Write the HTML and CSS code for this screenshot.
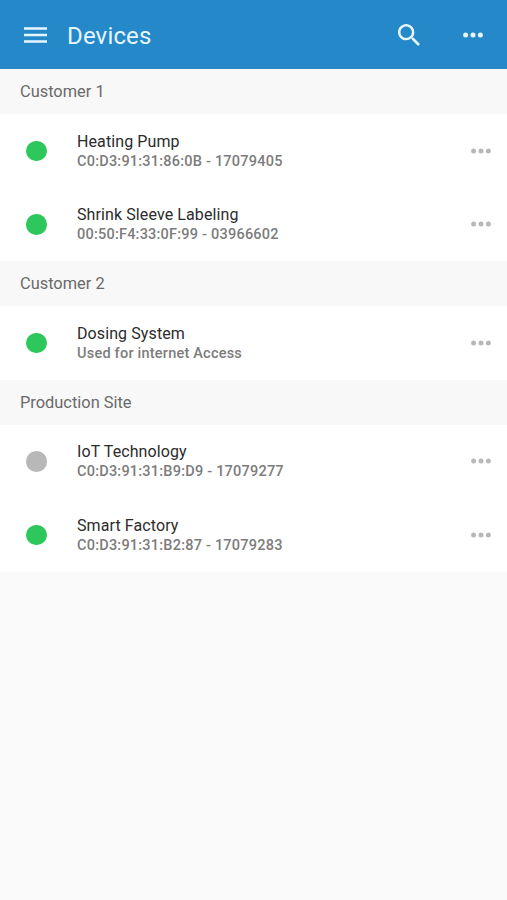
FILE: index.html
```html
<!DOCTYPE html>
<html lang="en">
<head>
<meta charset="utf-8">
<title>Devices</title>
<link rel="stylesheet" href="styles.css">
</head>
<body>

<header class="toolbar">
	<svg class="menu" viewBox="0 0 23 16"><path d="M0 .3h23v2.4H0zM0 6.8h23v2.4H0zM0 13.3h23v2.4H0z"/></svg>
	<h1>Devices</h1>
	<svg class="search" viewBox="3 3 17.5 17.5"><path d="M15.5 14h-.79l-.28-.27C15.41 12.59 16 11.11 16 9.5 16 5.91 13.09 3 9.5 3S3 5.91 3 9.5 5.91 16 9.5 16c1.61 0 3.09-.59 4.23-1.57l.27.28v.79l5 4.99L20.49 19l-4.99-5zm-6 0C7.01 14 5 11.99 5 9.5S7.01 5 9.5 5 14 7.01 14 9.5 11.99 14 9.5 14z"/></svg>
	<svg class="dots" viewBox="0 0 20 6"><circle cx="2.6" cy="3" r="2.5"/><circle cx="10" cy="3" r="2.5"/><circle cx="17.4" cy="3" r="2.5"/></svg>
</header>

<main>
	<h2>Customer 1</h2>
	<ul>
		<li>
			<span class="status online"></span>
			<div class="device"><h3>Heating Pump</h3><p>C0:D3:91:31:86:0B - 17079405</p></div>
			<svg class="dots" viewBox="0 0 20 6"><circle cx="2.6" cy="3" r="2.5"/><circle cx="10" cy="3" r="2.5"/><circle cx="17.4" cy="3" r="2.5"/></svg>
		</li>
		<li>
			<span class="status online"></span>
			<div class="device"><h3>Shrink Sleeve Labeling</h3><p>00:50:F4:33:0F:99 - 03966602</p></div>
			<svg class="dots" viewBox="0 0 20 6"><circle cx="2.6" cy="3" r="2.5"/><circle cx="10" cy="3" r="2.5"/><circle cx="17.4" cy="3" r="2.5"/></svg>
		</li>
	</ul>

	<h2>Customer 2</h2>
	<ul>
		<li>
			<span class="status online"></span>
			<div class="device"><h3>Dosing System</h3><p>Used for internet Access</p></div>
			<svg class="dots" viewBox="0 0 20 6"><circle cx="2.6" cy="3" r="2.5"/><circle cx="10" cy="3" r="2.5"/><circle cx="17.4" cy="3" r="2.5"/></svg>
		</li>
	</ul>

	<h2>Production Site</h2>
	<ul>
		<li>
			<span class="status"></span>
			<div class="device"><h3>IoT Technology</h3><p>C0:D3:91:31:B9:D9 - 17079277</p></div>
			<svg class="dots" viewBox="0 0 20 6"><circle cx="2.6" cy="3" r="2.5"/><circle cx="10" cy="3" r="2.5"/><circle cx="17.4" cy="3" r="2.5"/></svg>
		</li>
		<li>
			<span class="status online"></span>
			<div class="device"><h3>Smart Factory</h3><p>C0:D3:91:31:B2:87 - 17079283</p></div>
			<svg class="dots" viewBox="0 0 20 6"><circle cx="2.6" cy="3" r="2.5"/><circle cx="10" cy="3" r="2.5"/><circle cx="17.4" cy="3" r="2.5"/></svg>
		</li>
	</ul>
</main>

</body>
</html>
```
FILE: styles.css
```css
* {box-sizing: border-box;}
body {margin: 0; background: #fafafa; font-family: Roboto, sans-serif; color: #2b2b2b;}
h1, h2, h3, p, ul {margin: 0; padding: 0; font-weight: 400;}
ul {list-style: none; background: #fff;}
svg {display: block; flex: none;}

/* Top bar */
.toolbar {display: flex; align-items: center; height: 69px; padding: 1px 24px 0; background: #2488c9; color: #e6f6ff; fill: #e6f6ff;}
.toolbar h1 {flex: 1; margin-left: 20px; padding-top: 1px; font-size: 24px; line-height: 28px; letter-spacing: 0.15px;}
.menu {width: 23px; height: 16px;}
.search {width: 22px; height: 22px; margin-right: 43px;}
.dots {width: 20px; height: 6px;}

/* Group titles */
h2 {height: 45px; padding-left: 20px; background: #f8f8f8; color: #6a6a6a; font-size: 16.4px; line-height: 46px;}

/* Device rows */
li {display: flex; align-items: center; height: 73.5px; padding: 0 16px 0 26px; fill: #b8b8b8;}
.status {width: 20.5px; height: 20.5px; border-radius: 50%; background: #b8b8b8;}
.status.online {background: #2dc75c;}
.device {flex: 1; margin-left: 30.5px; padding-top: 2.4px;}
.device h3 {font-size: 16px; line-height: 20px; letter-spacing: 0.1px;}
.device p {color: #7c7c7c; font-size: 14.5px; font-weight: 500; line-height: 20px; letter-spacing: 0.22px;}
```
